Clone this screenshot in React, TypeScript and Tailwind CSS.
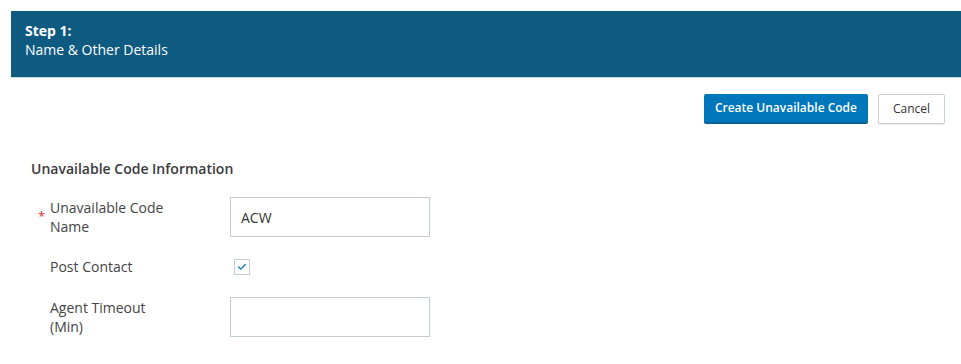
import { Check } from "lucide-react";

export default function App() {
  return (
    <div className="min-h-[364px] bg-white pt-[11px] pl-[11px] font-['Open_Sans',sans-serif] text-[#333]">
      {/* Step header */}
      <div className="h-[67px] bg-[#0e5a80] border-b border-[#c8d3dc] px-[14px] pt-[10px] text-[14px] leading-[19px] text-white">
        <div className="font-bold">Step 1:</div>
        <div>Name &amp; Other Details</div>
      </div>

      {/* Actions */}
      <div className="flex justify-end gap-[10px] pr-[16px] pt-[16px]">
        <button className="h-[30px] rounded-[2px] border-b-2 border-[#0a5f94] bg-[#0077bb] px-[11px] text-[12px] font-semibold text-white">
          Create Unavailable Code
        </button>
        <button className="h-[30px] w-[67px] rounded-[2px] border border-[#c5ced6] bg-white text-[12px] text-[#333] shadow-[0_1px_1px_rgba(0,0,0,0.08)]">
          Cancel
        </button>
      </div>

      {/* Form */}
      <div className="pl-[20px] pt-[35px]">
        <h3 className="text-[14px] font-semibold leading-[20px] text-[#3a3a3a]">Unavailable Code Information</h3>

        <div className="mt-[18px] flex flex-col">
          <div className="flex items-center">
            <div className="relative w-[199px] pl-[19px] text-[14px] leading-[19px] text-[#444]">
              <span className="absolute left-[7px] top-[12px] text-[13px] leading-none text-[#e8242b]">*</span>
              Unavailable Code
              <br />
              Name
            </div>
            <input
              defaultValue="ACW"
              className="h-[40px] w-[200px] border border-[#c2ccd3] px-[10px] text-[14px] text-[#333] outline-none"
            />
          </div>

          <div className="mt-[20px] flex items-center">
            <div className="w-[199px] pl-[19px] text-[14px] leading-[19px] text-[#444]">Post Contact</div>
            <div className="ml-[4px] flex h-[16px] w-[16px] items-center justify-center border border-[#c2ccd3] bg-white">
              <Check className="h-[10px] w-[10px] text-[#0077bb]" strokeWidth={3} />
            </div>
          </div>

          <div className="mt-[21px] flex items-center">
            <div className="w-[199px] pl-[19px] text-[14px] leading-[19px] text-[#444]">
              Agent Timeout
              <br />
              (Min)
            </div>
            <input className="h-[40px] w-[200px] border border-[#c2ccd3] px-[10px] text-[14px] outline-none" />
          </div>
        </div>
      </div>
    </div>
  );
}
